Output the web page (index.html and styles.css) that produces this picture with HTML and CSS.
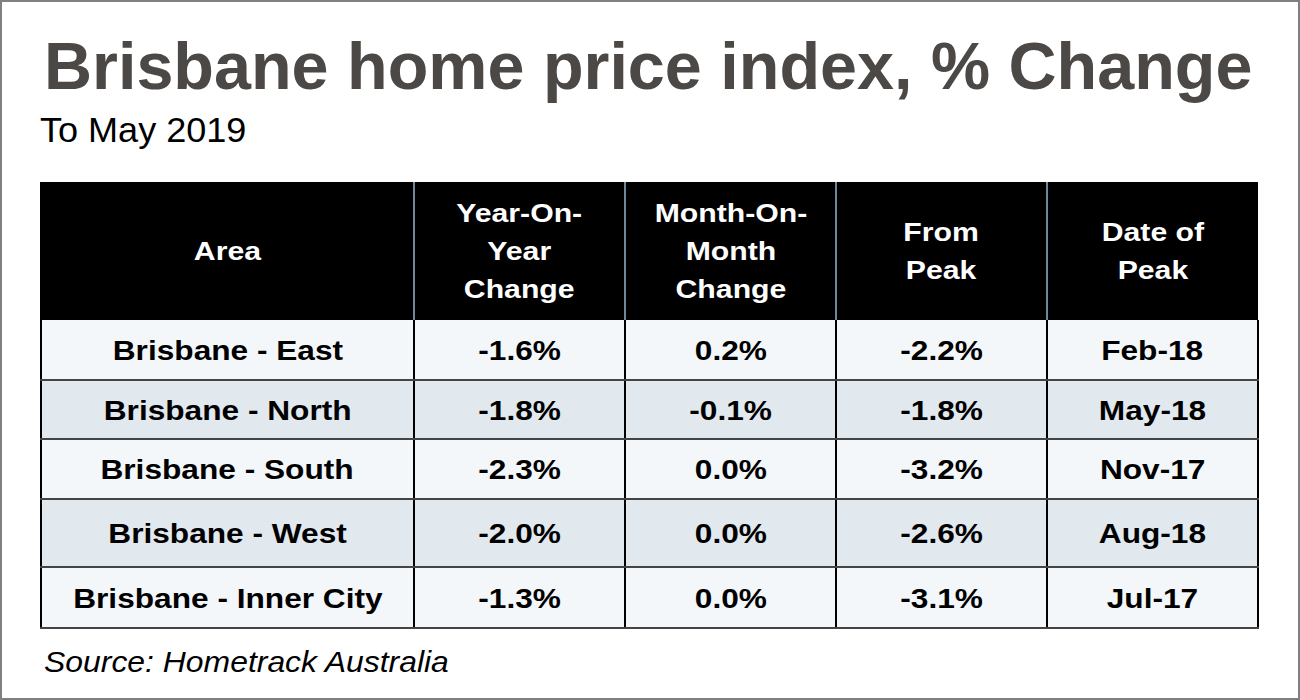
FILE: index.html
```html
<!DOCTYPE html>
<html>
<head>
<meta charset="utf-8">
<link rel="stylesheet" href="styles.css">
</head>
<body>
<div class="frame">
  <h1 class="title">Brisbane home price index, % Change</h1>
  <p class="subtitle"><span class="wide-s">To May 2019</span></p>
  <table class="data">
    <colgroup>
      <col class="c-area"><col class="c-num"><col class="c-num"><col class="c-num"><col class="c-num">
    </colgroup>
    <thead>
      <tr>
        <th><span class="w">Area</span></th>
        <th><span class="w">Year-On-<br>Year<br>Change</span></th>
        <th><span class="w">Month-On-<br>Month<br>Change</span></th>
        <th><span class="w">From<br>Peak</span></th>
        <th><span class="w">Date of<br>Peak</span></th>
      </tr>
    </thead>
    <tbody>
      <tr class="light r1"><td><span class="w">Brisbane - East</span></td><td><span class="w">-1.6%</span></td><td><span class="w">0.2%</span></td><td><span class="w">-2.2%</span></td><td><span class="w">Feb-18</span></td></tr>
      <tr class="dark r2"><td><span class="w">Brisbane - North</span></td><td><span class="w">-1.8%</span></td><td><span class="w">-0.1%</span></td><td><span class="w">-1.8%</span></td><td><span class="w">May-18</span></td></tr>
      <tr class="light r3"><td><span class="w">Brisbane - South</span></td><td><span class="w">-2.3%</span></td><td><span class="w">0.0%</span></td><td><span class="w">-3.2%</span></td><td><span class="w">Nov-17</span></td></tr>
      <tr class="dark r4"><td><span class="w">Brisbane - West</span></td><td><span class="w">-2.0%</span></td><td><span class="w">0.0%</span></td><td><span class="w">-2.6%</span></td><td><span class="w">Aug-18</span></td></tr>
      <tr class="light r5"><td><span class="w">Brisbane - Inner City</span></td><td><span class="w">-1.3%</span></td><td><span class="w">0.0%</span></td><td><span class="w">-3.1%</span></td><td><span class="w">Jul-17</span></td></tr>
    </tbody>
  </table>
  <p class="source"><span class="wide-s2">Source: Hometrack Australia</span></p>
</div>
</body>
</html>
```

FILE: styles.css
```css
* { box-sizing: border-box; }
html, body { margin: 0; padding: 0; background: #fff; }
.frame {
  width: 1300px;
  height: 700px;
  border: 2px solid #808080;
  padding: 31px 40px 0 38px;
  font-family: "Liberation Sans", Arial, sans-serif;
  display: flex;
  flex-direction: column;
  align-items: flex-start;
}
.title {
  margin: 0 0 0 4px;
  font-size: 66.5px;
  line-height: 67px;
  font-weight: bold;
  color: #4b4845;
  white-space: nowrap;
}
.subtitle {
  margin: 12px 0 0 0;
  font-size: 35px;
  line-height: 35px;
  color: #000;
}
.wide-s {
  display: inline-block;
  transform: scaleX(1.03);
  transform-origin: left center;
}
.data {
  margin-top: 35px;
  width: 1218px;
  border-collapse: collapse;
  table-layout: fixed;
}
.c-area { width: 373px; }
.c-num { width: 211px; }
.w {
  display: inline-block;
  transform: scaleX(1.14);
  transform-origin: center center;
}
.data th {
  background: #000;
  color: #fff;
  font-size: 26.5px;
  line-height: 38px;
  font-weight: bold;
  height: 138px;
  padding: 0;
  border-left: 2px solid #6e8799;
  text-align: center;
  vertical-align: middle;
}
.data th:first-child { border-left: 2px solid #000; }
.data td {
  font-size: 28px;
  font-weight: bold;
  color: #000;
  text-align: center;
  vertical-align: middle;
  padding: 2px 0 0 0;
  border-left: 2px solid #000;
  border-right: 2px solid #000;
  border-bottom: 2px solid #444;
}
.data td .w { transform: scaleX(1.13); }
.light td { background: #f3f7fa; }
.dark td { background: #e1e8ee; }
.r1 td { height: 60px; }
.r2 td { height: 59px; }
.r3 td { height: 60px; }
.r4 td { height: 68px; }
.r5 td { height: 61px; }
.source {
  margin: 19px 0 0 4px;
  font-size: 29px;
  line-height: 29px;
  font-style: italic;
  color: #000;
}
.wide-s2 {
  display: inline-block;
  transform: scaleX(1.1);
  transform-origin: left center;
}
```
